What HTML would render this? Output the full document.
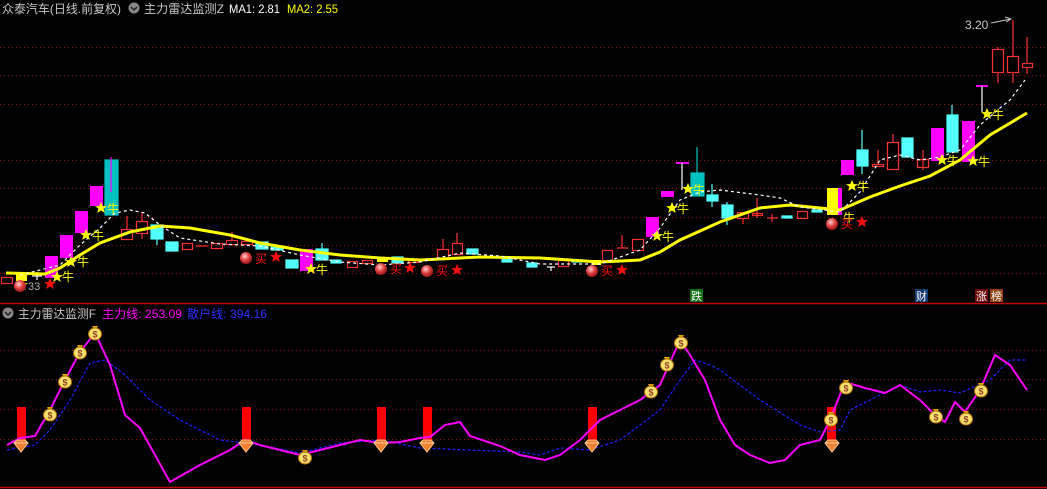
<!DOCTYPE html>
<html><head><meta charset="utf-8"><style>
html,body{margin:0;padding:0;background:#000;width:1047px;height:489px;overflow:hidden}
svg{display:block}
text{font-family:"Liberation Sans","Noto Sans CJK SC",sans-serif}
</style></head><body>
<svg width="1047" height="489" viewBox="0 0 1047 489" xmlns="http://www.w3.org/2000/svg">
<rect width="1047" height="489" fill="#000"/>
<g stroke="#8a1010" stroke-width="1" stroke-dasharray="1,3">
<line x1="0" y1="47.5" x2="1047" y2="47.5"/><line x1="0" y1="75.5" x2="1047" y2="75.5"/>
<line x1="0" y1="104.5" x2="1047" y2="104.5"/><line x1="0" y1="160.5" x2="1047" y2="160.5"/>
<line x1="0" y1="188.5" x2="1047" y2="188.5"/><line x1="0" y1="217.5" x2="1047" y2="217.5"/>
<line x1="0" y1="245.5" x2="1047" y2="245.5"/><line x1="0" y1="273.5" x2="1047" y2="273.5"/>
<line x1="0" y1="350.5" x2="1047" y2="350.5"/><line x1="0" y1="379.5" x2="1047" y2="379.5"/>
<line x1="0" y1="409.5" x2="1047" y2="409.5"/><line x1="0" y1="439.5" x2="1047" y2="439.5"/>
</g>
<line x1="0" y1="303.5" x2="1047" y2="303.5" stroke="#c00000" stroke-width="1.5"/>
<line x1="0" y1="487.5" x2="1047" y2="487.5" stroke="#c00000" stroke-width="1.5"/>

<text x="2" y="13" font-size="12" fill="#c8c8c8" textLength="119" lengthAdjust="spacingAndGlyphs">众泰汽车(日线.前复权)</text>
<circle cx="134" cy="8" r="5.5" fill="#888"/><path d="M131 7 L134 10 L137 7" stroke="#222" stroke-width="1.5" fill="none"/>
<text x="144" y="13" font-size="12" fill="#c8c8c8" textLength="80" lengthAdjust="spacingAndGlyphs">主力雷达监测Z</text>
<text x="229" y="13" font-size="12" fill="#fff" textLength="51" lengthAdjust="spacingAndGlyphs">MA1: 2.81</text>
<text x="287" y="13" font-size="12" fill="#ffff00" textLength="51" lengthAdjust="spacingAndGlyphs">MA2: 2.55</text>

<g stroke-width="1.2">
<g stroke="#ff3232" fill="none">
<rect x="1.5" y="277.5" width="11" height="6"/>
<rect x="121.5" y="229.5" width="11" height="10"/><line x1="127" y1="216" x2="127" y2="229"/>
<rect x="136.5" y="221.5" width="11" height="12"/><line x1="142" y1="212" x2="142" y2="221"/><line x1="142" y1="234" x2="142" y2="239"/>
<rect x="182.5" y="243.5" width="10" height="6"/>
<line x1="196" y1="246" x2="208" y2="246"/>
<rect x="211.5" y="243.5" width="11" height="5"/>
<rect x="226.5" y="240.5" width="11" height="4"/><line x1="232" y1="232" x2="232" y2="240"/>
<rect x="241.5" y="241.5" width="11" height="3"/>
<rect x="347.5" y="261.5" width="10" height="6"/>
<rect x="362.5" y="260.5" width="10" height="3"/>
<rect x="408.5" y="260.5" width="10" height="2"/>
<rect x="437.5" y="249.5" width="11" height="10"/><line x1="443" y1="239" x2="443" y2="249"/>
<rect x="452.5" y="243.5" width="10" height="11"/><line x1="457" y1="233" x2="457" y2="243"/>
<rect x="558.5" y="260.5" width="10" height="6"/>
<rect x="602.5" y="250.5" width="10" height="10"/>
<line x1="617" y1="248" x2="628" y2="248"/><line x1="622" y1="235" x2="622" y2="248"/>
<rect x="632.5" y="239.5" width="11" height="11"/>
<rect x="737.5" y="212.5" width="11" height="6"/><line x1="743" y1="218" x2="743" y2="224"/>
<rect x="752.5" y="213.5" width="10" height="2"/><line x1="757" y1="198" x2="757" y2="218"/>
<line x1="767" y1="218" x2="778" y2="218"/><line x1="772" y1="214" x2="772" y2="222"/>
<rect x="797.5" y="211.5" width="10" height="7"/>
<rect x="872.5" y="164.5" width="11" height="2"/><line x1="878" y1="150" x2="878" y2="164"/>
<rect x="887.5" y="142.5" width="11" height="27"/><line x1="893" y1="134" x2="893" y2="142"/>
<rect x="917.5" y="159.5" width="11" height="8"/><line x1="923" y1="150" x2="923" y2="170"/>
<rect x="992.5" y="49.5" width="11" height="23"/><line x1="998" y1="47" x2="998" y2="49"/><line x1="998" y1="73" x2="998" y2="83"/>
<rect x="1007.5" y="56.5" width="11" height="16"/><line x1="1013" y1="20" x2="1013" y2="56"/><line x1="1013" y1="73" x2="1013" y2="83"/>
<rect x="1022.5" y="63.5" width="10" height="4"/><line x1="1027" y1="37" x2="1027" y2="63"/><line x1="1027" y1="68" x2="1027" y2="74"/>
</g>
<g fill="#54ffff" stroke="#54ffff">
<rect x="151" y="225" width="12" height="14"/><line x1="157" y1="239" x2="157" y2="245"/>
<rect x="166" y="242" width="12" height="9"/>
<rect x="256" y="242" width="12" height="7"/>
<rect x="271" y="247" width="12" height="3"/>
<rect x="286" y="260" width="12" height="8"/>
<rect x="316" y="249" width="12" height="11"/><line x1="322" y1="243" x2="322" y2="249"/>
<rect x="331" y="260" width="10" height="3"/>
<rect x="392" y="257" width="11" height="6"/>
<rect x="467" y="249" width="11" height="5"/>
<rect x="502" y="259" width="10" height="3"/>
<rect x="527" y="263" width="10" height="4"/>
<rect x="572" y="260" width="10" height="2"/>
<rect x="707" y="195" width="11" height="6"/><line x1="712" y1="184" x2="712" y2="207"/>
<rect x="722" y="205" width="11" height="13"/><line x1="727" y1="202" x2="727" y2="225"/>
<rect x="782" y="216" width="10" height="2"/>
<rect x="812" y="210" width="10" height="2"/>
<rect x="857" y="150" width="11" height="16"/><line x1="862" y1="130" x2="862" y2="174"/>
<rect x="902" y="138" width="11" height="19"/>
<rect x="947" y="115" width="11" height="37"/><line x1="952" y1="105" x2="952" y2="115"/>
</g>
<g fill="#00c0c0" stroke="#00c0c0">
<rect x="105" y="160" width="13" height="55"/>
<rect x="691" y="173" width="13" height="23"/><line x1="697" y1="147" x2="697" y2="173"/>
</g>
<line x1="111" y1="157" x2="111" y2="192" stroke="#ff00ff"/>
<g fill="#ff00ff">
<rect x="45" y="256" width="13" height="22"/><rect x="60" y="235" width="13" height="23"/>
<rect x="75" y="211" width="13" height="22"/><rect x="90" y="186" width="13" height="20"/>
<rect x="300" y="249" width="13" height="22"/><rect x="646" y="217" width="13" height="20"/>
<rect x="661" y="191" width="13" height="6"/><rect x="841" y="160" width="13" height="15"/>
<rect x="931" y="128" width="13" height="33"/><rect x="962" y="121" width="13" height="41"/>
<rect x="676" y="162" width="13" height="2"/><rect x="976" y="85" width="12" height="2"/>
<rect x="838" y="188" width="4" height="27"/>
</g>
<g stroke="#fff"><line x1="682" y1="163" x2="682" y2="190"/><line x1="982" y1="86" x2="982" y2="112"/>
<line x1="547" y1="267" x2="555" y2="267"/><line x1="551" y1="267" x2="551" y2="271"/>
<line x1="32" y1="276" x2="42" y2="276"/><line x1="37" y1="272" x2="37" y2="280"/></g>
<g fill="#ffff00">
<rect x="16" y="274" width="11" height="7"/><rect x="377" y="257" width="11" height="5"/>
<rect x="592" y="260" width="9" height="5"/><rect x="827" y="188" width="11" height="27"/>
</g>
</g>

<polyline fill="none" stroke="#ffff00" stroke-width="3" points="6,273 45,274 60,268 80,255 100,243 130,232 160,226 190,228 230,235 260,243 300,250 340,255 380,258 420,260 480,257 540,258 600,262 640,260 660,252 680,240 720,222 760,208 790,205 820,208 840,210 870,197 900,186 930,176 960,160 990,135 1027,113"/>
<polyline fill="none" stroke="#fff" stroke-width="1.2" stroke-dasharray="3,3" points="20,275 60,265 80,245 100,228 115,213 130,210 145,213 160,225 180,238 220,244 260,246 300,255 340,262 380,265 420,262 460,253 500,256 540,264 600,264 640,250 660,228 680,200 700,192 720,190 760,195 780,198 800,207 840,212 860,192 880,160 900,155 920,160 940,157 960,150 980,125 1000,108 1010,100 1025,80"/>

<defs>
<path id="st" d="M0,-6 L1.8,-1.9 L6,-1.9 L2.6,0.8 L3.8,5 L0,2.5 L-3.8,5 L-2.6,0.8 L-6,-1.9 L-1.8,-1.9Z"/>
<radialGradient id="ball" cx="0.4" cy="0.35" r="0.7"><stop offset="0" stop-color="#ffd0d0"/><stop offset="0.5" stop-color="#e04040"/><stop offset="1" stop-color="#901010"/></radialGradient>
<g id="bag"><path d="M-3,-8 L3,-8 L1.5,-5 L-1.5,-5Z" fill="#e0a000"/><ellipse cx="0" cy="0" rx="6.5" ry="6" fill="#f8e070" stroke="#b07000"/><text x="0" y="3.5" font-size="9" text-anchor="middle" fill="#904020" font-weight="bold">$</text></g>
<g id="dia"><path d="M-7,-4 L-4,-7 L4,-7 L7,-4 L0,5Z" fill="#f08030" stroke="#ffc080" stroke-width="1"/><path d="M-7,-4 L7,-4" stroke="#ffd0a0"/></g>
</defs>
<g fill="#ffff00">
<use href="#st" x="57" y="277"/><use href="#st" x="71" y="262"/><use href="#st" x="86" y="235"/><use href="#st" x="101" y="208"/>
<use href="#st" x="311" y="269"/><use href="#st" x="657" y="236"/><use href="#st" x="672" y="208"/><use href="#st" x="688" y="189"/>
<use href="#st" x="852" y="186"/><use href="#st" x="942" y="160"/><use href="#st" x="973" y="161"/><use href="#st" x="987" y="114"/>
<use href="#st" x="22" y="285"/>
</g>
<g font-size="12" fill="#ffff00">
<text x="62" y="281">牛</text><text x="77" y="266">牛</text><text x="92" y="240">牛</text><text x="107" y="213">牛</text>
<text x="316" y="274">牛</text><text x="662" y="241">牛</text><text x="677" y="213">牛</text><text x="693" y="194">牛</text>
<text x="843" y="222">牛</text><text x="857" y="191">牛</text><text x="947" y="165">牛</text><text x="978" y="166">牛</text><text x="992" y="119">牛</text>
</g>
<g>
<circle cx="20" cy="286" r="6" fill="url(#ball)"/><use href="#st" x="50" y="284" fill="#ff1010"/><text x="28" y="290" font-size="11" fill="#aaa">33</text>
<circle cx="246" cy="258" r="6" fill="url(#ball)"/><text x="255" y="263" font-size="12" fill="#ff1010">买</text><use href="#st" x="276" y="257" fill="#ff1010"/>
<circle cx="381" cy="269" r="6" fill="url(#ball)"/><text x="390" y="273" font-size="12" fill="#ff1010">买</text><use href="#st" x="410" y="268" fill="#ff1010"/>
<circle cx="427" cy="271" r="6" fill="url(#ball)"/><text x="436" y="275" font-size="12" fill="#ff1010">买</text><use href="#st" x="457" y="270" fill="#ff1010"/>
<circle cx="592" cy="271" r="6" fill="url(#ball)"/><text x="601" y="275" font-size="12" fill="#ff1010">买</text><use href="#st" x="622" y="270" fill="#ff1010"/>
<circle cx="832" cy="224" r="6" fill="url(#ball)"/><text x="841" y="228" font-size="12" fill="#ff1010">买</text><use href="#st" x="862" y="222" fill="#ff1010"/>
</g>
<text x="965" y="29" font-size="12" fill="#c8c8c8">3.20</text>
<path d="M991,23 L1011,19 M1005,17 L1011,19 L1006,22" stroke="#c8c8c8" fill="none"/>
<rect x="690" y="289" width="13" height="13" fill="#107010"/><text x="691" y="300" font-size="11" fill="#fff">跌</text>
<rect x="915" y="289" width="13" height="13" fill="#103a70"/><text x="916" y="300" font-size="11" fill="#fff">财</text>
<rect x="975" y="289" width="13" height="13" fill="#700808"/><text x="976" y="300" font-size="11" fill="#fff">涨</text>
<rect x="990" y="289" width="13" height="13" fill="#904010"/><text x="991" y="300" font-size="11" fill="#fff">榜</text>

<circle cx="8" cy="313" r="5.5" fill="#888"/><path d="M5 312 L8 315 L11 312" stroke="#222" stroke-width="1.5" fill="none"/>
<text x="18" y="318" font-size="12" fill="#c8c8c8" textLength="78" lengthAdjust="spacingAndGlyphs">主力雷达监测F</text>
<text x="102" y="318" font-size="12" fill="#ff00ff" textLength="80" lengthAdjust="spacingAndGlyphs">主力线: 253.09</text>
<text x="187" y="318" font-size="12" fill="#3030ff" textLength="80" lengthAdjust="spacingAndGlyphs">散户线: 394.16</text>

<g fill="#ff0000">
<rect x="17" y="407" width="9" height="33"/><rect x="242" y="407" width="9" height="33"/>
<rect x="377" y="407" width="9" height="33"/><rect x="423" y="407" width="9" height="33"/>
<rect x="588" y="407" width="9" height="33"/><rect x="827" y="407" width="9" height="33"/>
</g>
<polyline fill="none" stroke="#2020ff" stroke-width="1.2" stroke-dasharray="3,2" points="7,450 35,445 50,430 70,400 90,363 105,360 125,375 150,400 180,420 220,440 260,445 300,453 340,443 380,440 420,448 470,450 520,452 540,455 560,448 590,450 620,440 660,410 680,380 695,360 710,365 720,370 760,400 800,425 820,432 840,430 850,410 870,400 900,385 920,392 940,390 960,393 990,380 1010,360 1027,360"/>
<polyline fill="none" stroke="#ff00ff" stroke-width="2" points="7,445 20,438 35,436 50,410 65,380 80,352 95,333 110,365 125,415 140,428 170,482 200,465 230,450 245,440 260,445 280,450 300,455 320,450 340,445 360,440 380,443 400,442 420,438 430,437 445,425 460,422 470,436 500,446 520,455 545,460 560,455 580,440 600,420 620,410 640,400 660,385 680,340 690,355 705,380 720,420 735,445 750,455 770,463 785,460 800,445 820,440 830,420 845,382 865,388 885,393 900,385 920,400 935,415 945,422 955,402 965,412 980,390 995,355 1010,365 1027,390"/>
<g>
<use href="#bag" x="50" y="415"/><use href="#bag" x="65" y="382"/><use href="#bag" x="80" y="353"/><use href="#bag" x="95" y="334"/>
<use href="#bag" x="305" y="458"/><use href="#bag" x="651" y="392"/><use href="#bag" x="667" y="365"/><use href="#bag" x="681" y="343"/>
<use href="#bag" x="846" y="388"/><use href="#bag" x="831" y="420"/><use href="#bag" x="936" y="417"/><use href="#bag" x="966" y="419"/><use href="#bag" x="981" y="391"/>
</g>
<g>
<use href="#dia" x="21" y="447"/><use href="#dia" x="246" y="447"/><use href="#dia" x="381" y="447"/>
<use href="#dia" x="427" y="447"/><use href="#dia" x="592" y="447"/><use href="#dia" x="832" y="447"/>
</g>
</svg>
</body></html>
